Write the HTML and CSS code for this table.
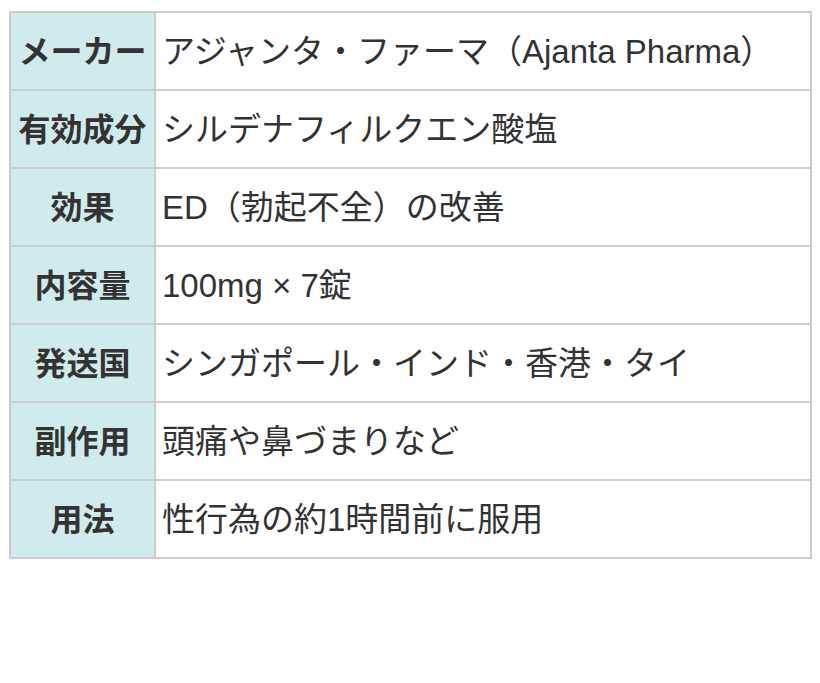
FILE: index.html
```html
<!DOCTYPE html>
<html lang="ja">
<head>
<meta charset="utf-8">
<link rel="stylesheet" href="styles.css">
</head>
<body>
<div class="wrap">
<table class="spec">
<colgroup><col class="c-head"><col></colgroup>
<tbody>
<tr><th>メーカー</th><td>アジャンタ・ファーマ（Ajanta Pharma）</td></tr>
<tr><th>有効成分</th><td>シルデナフィルクエン酸塩</td></tr>
<tr><th>効果</th><td>ED（勃起不全）の改善</td></tr>
<tr><th>内容量</th><td>100mg × 7錠</td></tr>
<tr><th>発送国</th><td>シンガポール・インド・香港・タイ</td></tr>
<tr><th>副作用</th><td>頭痛や鼻づまりなど</td></tr>
<tr><th>用法</th><td>性行為の約1時間前に服用</td></tr>
</tbody>
</table>
</div>
</body>
</html>
```
FILE: styles.css
```css
html, body {
  margin: 0;
  padding: 0;
  background: #ffffff;
}
.wrap {
  padding: 11px 8px 0 9px;
}
.spec {
  width: 803px;
  border-collapse: collapse;
  table-layout: fixed;
  font-family: "Liberation Sans", "Noto Sans CJK JP", sans-serif;
  font-size: 33px;
  color: #333333;
}
.c-head {
  width: 145px;
}
.spec th,
.spec td {
  border: 2px solid #cccccc;
  height: 78px;
  padding: 0 6px 5px;
  box-sizing: border-box;
  vertical-align: middle;
  white-space: nowrap;
}
.spec th {
  background: #d0ebeb;
  font-weight: bold;
  font-size: 32px;
  text-align: center;
  padding: 0 0 5px;
}
.spec td {
  text-align: left;
  font-weight: normal;
}
```
